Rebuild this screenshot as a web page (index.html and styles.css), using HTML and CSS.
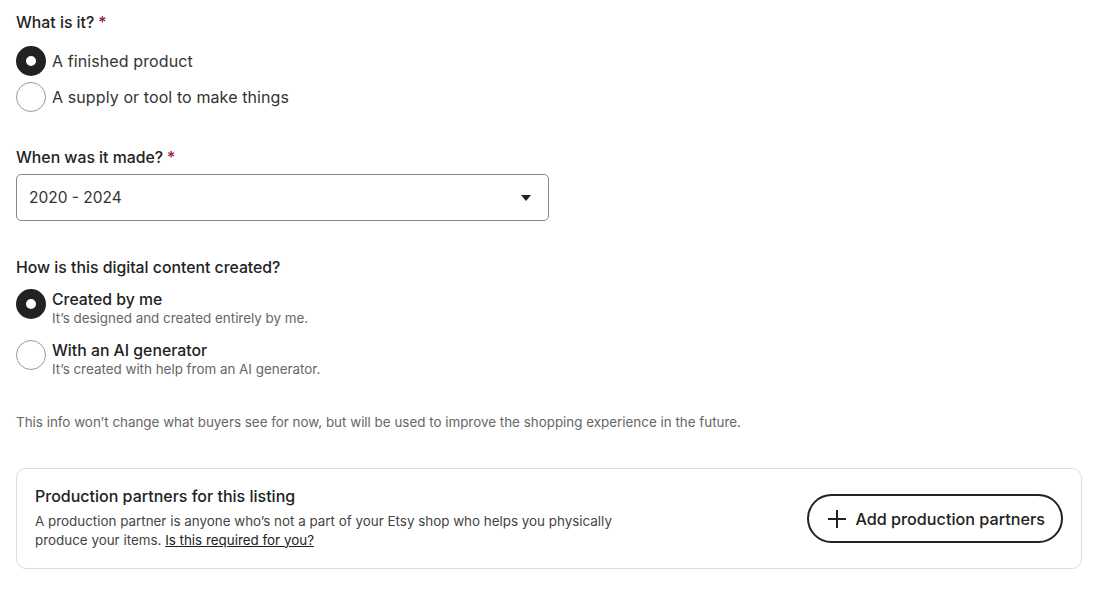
FILE: index.html
```html
<!DOCTYPE html>
<html>
<head>
<meta charset="utf-8">
<link rel="stylesheet" href="styles.css">
</head>
<body>
<div class="page">
  <div class="field">
    <div class="label">What is it?<span class="req">*</span></div>
    <div class="radios">
      <div class="radio"><span class="dot checked"></span><span class="rtext">A finished product</span></div>
      <div class="radio"><span class="dot"></span><span class="rtext">A supply or tool to make things</span></div>
    </div>
  </div>

  <div class="field f2">
    <div class="label">When was it made?<span class="req">*</span></div>
    <div class="select">
      <span>2020 - 2024</span>
      <svg class="caret" width="10" height="6" viewBox="0 0 10 6"><path d="M0 0h10L5 6z" fill="#222"/></svg>
    </div>
  </div>

  <div class="field f3">
    <div class="label">How is this digital content created?</div>
    <div class="radios r2">
      <div class="radio top"><span class="dot checked"></span>
        <div class="rbody"><div class="rtitle">Created by me</div><div class="rsub">It’s designed and created entirely by me.</div></div>
      </div>
      <div class="radio top"><span class="dot"></span>
        <div class="rbody"><div class="rtitle">With an AI generator</div><div class="rsub">It’s created with help from an AI generator.</div></div>
      </div>
    </div>
  </div>

  <p class="info">This info won’t change what buyers see for now, but will be used to improve the shopping experience in the future.</p>

  <div class="card">
    <div class="cardtext">
      <div class="ctitle">Production partners for this listing</div>
      <div class="cdesc">A production partner is anyone who’s not a part of your Etsy shop who helps you physically produce your items. <a href="#">Is this required for you?</a></div>
    </div>
    <button class="btn"><svg width="20" height="20" viewBox="0 0 20 20"><path d="M10 1v18M1 10h18" stroke="#222" stroke-width="2"/></svg>Add production partners</button>
  </div>
</div>
</body>
</html>
```

FILE: styles.css
```css
* { box-sizing: border-box; }
body { margin: 0; background: #fff; font-family: "Inter", "Roboto", "Liberation Sans", sans-serif; color: #222; }
.page { padding: 13px 24px 0 16px; width: 1106px; }
.label { font-size: 15.8px; font-weight: 500; line-height: 20px; }
.req { color: #8b1a3a; margin-left: 4px; }
.radios { margin-top: 13px; display: flex; flex-direction: column; gap: 6px; }
.radio { display: flex; align-items: center; gap: 6px; }
.radio.top { align-items: flex-start; }
.dot { width: 30px; height: 30px; border-radius: 50%; border: 1px solid #999; flex: none; background: #fff; }
.dot.checked { border: 10px solid #222; background: #fff; }
.rtext { font-size: 16px; color: #333; line-height: 20px; letter-spacing: 0.1px; }
.f2 { margin-top: 36px; }
.select { margin-top: 6px; width: 533px; height: 47px; border: 1px solid #888; border-radius: 5px; display: flex; align-items: center; justify-content: space-between; padding: 0 17px 0 12px; font-size: 15.5px; color: #333; }
.f3 { margin-top: 37px; }
.r2 { margin-top: 11px; gap: 12px; }
.rbody { padding-top: 2px; }
.rtitle { font-size: 15.8px; font-weight: 500; line-height: 18px; }
.rsub { font-size: 13.4px; color: #666; line-height: 19px; }
.info { margin: 34px 0 0; font-size: 13.4px; color: #666; line-height: 18px; }
.card { margin-top: 37px; width: 1066px; height: 101px; border: 1px solid #ddd; border-radius: 10px; display: flex; align-items: center; justify-content: space-between; padding: 0 18px 0 18px; }
.ctitle { font-size: 16px; font-weight: 500; line-height: 20px; margin-top: -2px; }
.cdesc { font-size: 13.4px; color: #444; line-height: 19px; width: 590px; margin-top: 6px; }
.cdesc a { color: #222; text-decoration: underline; }
.btn { height: 49px; border: 2px solid #222; border-radius: 25px; background: #fff; display: flex; align-items: center; gap: 8px; padding: 0 16px 0 18px; font-family: inherit; font-size: 16.2px; font-weight: 500; color: #222; }
```
